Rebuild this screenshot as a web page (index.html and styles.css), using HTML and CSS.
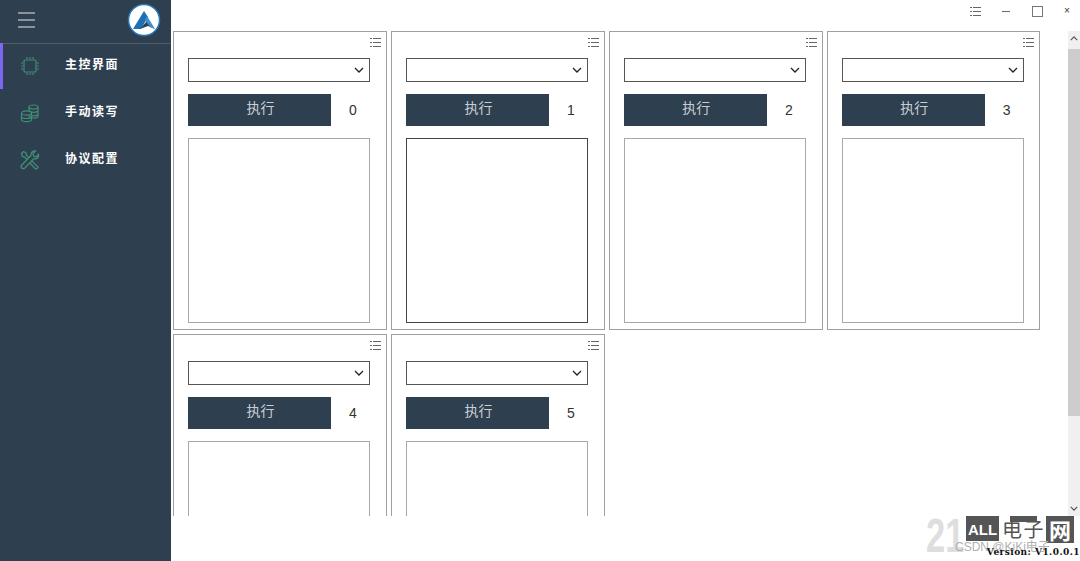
FILE: index.html
```html
<!DOCTYPE html>
<html lang="zh">
<head>
    <meta charset="UTF-8">
    <title>主控界面</title>
    <link rel="stylesheet" href="styles.css">
</head>

<body>
    <!-- 左侧菜单 -->
    <aside class="side">
        <div class="side-top">
            <div class="burger"><i></i><i></i><i></i></div>
            <svg class="logo" viewBox="0 0 34 34" width="34" height="34">
                <circle cx="17" cy="17" r="15.500" fill="#fff" stroke="#2a78b8" stroke-width="1.500"/>
                <path d="M6 26 L17 8 L21 14 L14 26 Z" fill="#1f6fb5"/>
                <path d="M13 26 L20 18 L28 26 L21 23 Z" fill="#2f3f52"/>
                <path d="M20 13 L28 26 L23 24 L18 17 Z" fill="#3f8fd0"/>
            </svg>
        </div>
        <ul class="menu">
            <li class="on">
                <svg viewBox="0 0 20 20" width="20" height="20" fill="none" stroke="#3f8f74" stroke-width="1.200">
                    <rect x="4" y="4" width="12" height="12" rx="1"/>
                    <path d="M7 1v2M10 1v2M13 1v2M7 17v2M10 17v2M13 17v2M1 7h2M1 10h2M1 13h2M17 7h2M17 10h2M17 13h2"/>
                </svg>
                <span>主控界面</span>
            </li>
            <li>
                <svg viewBox="0 0 20 20" width="20" height="20" fill="none" stroke="#3f8f74" stroke-width="1.200">
                    <ellipse cx="13.500" cy="4" rx="4.500" ry="2"/>
                    <path d="M9 4v9c0 1 2 2 4.500 2s4.500-1 4.500-2V4M11 8.800c.7.300 1.600.500 2.500.500 2.500 0 4.500-1 4.500-2M11 12.300c.7.300 1.600.500 2.500.500 2.500 0 4.500-1 4.500-2"/>
                    <ellipse cx="6.500" cy="10" rx="5" ry="2.200" fill="#2e3f50"/>
                    <path d="M1.500 10v6.500c0 1.200 2.200 2.200 5 2.200s5-1 5-2.200V10M1.500 13.300c0 1.200 2.200 2.200 5 2.200s5-1 5-2.200"/>
                </svg>
                <span>手动读写</span>
            </li>
            <li>
                <svg viewBox="0 0 20 20" width="20" height="20" fill="none" stroke="#3f8f74" stroke-width="1.300">
                    <path d="M1.500 3.500 3.500 1.500 6 3l.5 2.500L18 17l-1 1.500-1.500.5L4.500 7 2.500 6.500Z"/>
                    <path d="M18.500 4.500 16 7 13.500 6 13 3.500 15.500 1C13 .5 10.500 2.500 11 5.500L1.800 15c-1 1.200-.8 2.300 0 3 .8.800 2 .8 3 0L13.800 8.800c3 .7 5.300-1.300 4.700-4.300Z" fill="#2e3f50"/>
                </svg>
                <span>协议配置</span>
            </li>
        </ul>
    </aside>

    <main class="main">
        <!-- 窗口按钮 -->
        <header class="bar">
            <svg class="list-ico" viewBox="0 0 11 9" width="11" height="9"><path d="M0 .5h2M3 .5h8M0 4.500h2M3 4.500h8M0 8.500h2M3 8.500h8" stroke="#666" fill="none"/></svg>
            <span class="win-min"></span>
            <span class="win-max"></span>
            <span class="win-close">×</span>
        </header>

        <div class="body">
            <div class="cards">
                <section class="card">
                    <svg class="list-ico" viewBox="0 0 11 9" width="11" height="9"><path d="M0 .5h2M3 .5h8M0 4.500h2M3 4.500h8M0 8.500h2M3 8.500h8" stroke="#666" fill="none"/></svg>
                    <div class="sel"><svg viewBox="0 0 10 6" width="10" height="6"><path d="M1 1l4 4 4-4" stroke="#222" stroke-width="1.300" fill="none"/></svg></div>
                    <div class="row"><button class="run">执行</button><span class="num">0</span></div>
                    <div class="box"></div>
                </section>
                <section class="card">
                    <svg class="list-ico" viewBox="0 0 11 9" width="11" height="9"><path d="M0 .5h2M3 .5h8M0 4.500h2M3 4.500h8M0 8.500h2M3 8.500h8" stroke="#666" fill="none"/></svg>
                    <div class="sel"><svg viewBox="0 0 10 6" width="10" height="6"><path d="M1 1l4 4 4-4" stroke="#222" stroke-width="1.300" fill="none"/></svg></div>
                    <div class="row"><button class="run">执行</button><span class="num">1</span></div>
                    <div class="box dark"></div>
                </section>
                <section class="card">
                    <svg class="list-ico" viewBox="0 0 11 9" width="11" height="9"><path d="M0 .5h2M3 .5h8M0 4.500h2M3 4.500h8M0 8.500h2M3 8.500h8" stroke="#666" fill="none"/></svg>
                    <div class="sel"><svg viewBox="0 0 10 6" width="10" height="6"><path d="M1 1l4 4 4-4" stroke="#222" stroke-width="1.300" fill="none"/></svg></div>
                    <div class="row"><button class="run">执行</button><span class="num">2</span></div>
                    <div class="box"></div>
                </section>
                <section class="card">
                    <svg class="list-ico" viewBox="0 0 11 9" width="11" height="9"><path d="M0 .5h2M3 .5h8M0 4.500h2M3 4.500h8M0 8.500h2M3 8.500h8" stroke="#666" fill="none"/></svg>
                    <div class="sel"><svg viewBox="0 0 10 6" width="10" height="6"><path d="M1 1l4 4 4-4" stroke="#222" stroke-width="1.300" fill="none"/></svg></div>
                    <div class="row"><button class="run">执行</button><span class="num">3</span></div>
                    <div class="box"></div>
                </section>
                <section class="card">
                    <svg class="list-ico" viewBox="0 0 11 9" width="11" height="9"><path d="M0 .5h2M3 .5h8M0 4.500h2M3 4.500h8M0 8.500h2M3 8.500h8" stroke="#666" fill="none"/></svg>
                    <div class="sel"><svg viewBox="0 0 10 6" width="10" height="6"><path d="M1 1l4 4 4-4" stroke="#222" stroke-width="1.300" fill="none"/></svg></div>
                    <div class="row"><button class="run">执行</button><span class="num">4</span></div>
                    <div class="box"></div>
                </section>
                <section class="card">
                    <svg class="list-ico" viewBox="0 0 11 9" width="11" height="9"><path d="M0 .5h2M3 .5h8M0 4.500h2M3 4.500h8M0 8.500h2M3 8.500h8" stroke="#666" fill="none"/></svg>
                    <div class="sel"><svg viewBox="0 0 10 6" width="10" height="6"><path d="M1 1l4 4 4-4" stroke="#222" stroke-width="1.300" fill="none"/></svg></div>
                    <div class="row"><button class="run">执行</button><span class="num">5</span></div>
                    <div class="box"></div>
                </section>
            </div>
            <!-- 滚动条 -->
            <div class="scroll">
                <svg viewBox="0 0 10 6" width="8" height="5"><path d="M1 5l4-4 4 4" stroke="#555" stroke-width="1.500" fill="none"/></svg>
                <div class="thumb"></div>
                <svg class="down" viewBox="0 0 10 6" width="8" height="5"><path d="M1 1l4 4 4-4" stroke="#555" stroke-width="1.500" fill="none"/></svg>
            </div>
        </div>

        <footer class="foot">
            <div class="mark">
                <span class="mark-21">21</span>
                <span class="mark-all">ALL</span>
                <span class="mark-block"></span>
                <span class="mark-cn">电</span>
                <span class="mark-cn">子</span>
                <span class="mark-net">网</span>
                <span class="mark-csdn">CSDN @KiKi电子</span>
            </div>
            <span class="ver">Version: V1.0.0.1</span>
        </footer>
    </main>
</body>
</html>
```

FILE: styles.css
```css
html,
body {
    margin: 0;
    padding: 0;
    height: 100%;
}

body {
    display: flex;
    height: 561px;
    overflow: hidden;
    background-color: #fff;
    font-family: "Liberation Sans", "Noto Sans CJK SC", sans-serif;
}

/*左侧菜单*/
.side {
    flex: none;
    width: 171px;
    background-color: #2e3f50;
}

.side-top {
    display: flex;
    align-items: center;
    justify-content: space-between;
    box-sizing: border-box;
    height: 44px;
    padding: 0 10px 3px 18px;
    border-bottom: 1px solid #4f5d6b;
}

.burger i {
    display: block;
    width: 17px;
    height: 2px;
    margin: 5px 0;
    background-color: #8a939c;
}

.menu {
    margin: -1px 0 0;
    padding: 0;
    list-style: none;
}

.menu li {
    display: flex;
    align-items: center;
    box-sizing: border-box;
    height: 47.500px;
    padding-left: 17px;
    border-left: 3px solid transparent;
}

.menu li.on {
    height: 46px;
    border-left-color: #7b68ee;
}

.menu span {
    margin: 0 0 4px 25px;
    color: #fff;
    font: bold 12px/1 "Noto Sans CJK SC", sans-serif;
    letter-spacing: 1.500px;
}

/*主区域*/
.main {
    flex: 1;
    display: flex;
    flex-direction: column;
    min-width: 0;
}

.bar {
    flex: none;
    display: flex;
    align-items: center;
    box-sizing: border-box;
    height: 31px;
    padding: 0 0 9px 799px;
}

.bar .list-ico {
    position: static;
    margin-right: 21px;
}

.win-min {
    width: 8px;
    height: 1px;
    margin-right: 22px;
    background-color: #666;
}

.win-max {
    width: 9px;
    height: 9px;
    margin-right: 21px;
    border: 1px solid #777;
}

.win-close {
    color: #333;
    font-size: 10px;
    line-height: 10px;
}

.body {
    flex: none;
    display: flex;
    height: 485px;
    overflow: hidden;
}

.cards {
    flex: 1;
    display: flex;
    flex-wrap: wrap;
    align-content: flex-start;
    gap: 4px 4.100px;
    padding-left: 2px;
}

.card {
    position: relative;
    box-sizing: border-box;
    width: 213.800px;
    height: 299px;
    padding: 26px 15.800px 6px 14px;
    border: 1px solid #a0a0a0;
}

.card .list-ico {
    position: absolute;
    top: 6px;
    right: 5px;
}

.sel {
    display: flex;
    align-items: center;
    justify-content: flex-end;
    box-sizing: border-box;
    height: 24px;
    padding-right: 5px;
    border: 1px solid #555;
}

.row {
    display: flex;
    align-items: center;
    margin-top: 12px;
}

.run {
    flex: none;
    width: 143px;
    height: 32px;
    padding: 0 0 6px 2px;
    border: 0;
    background-color: #2e3f50;
    color: #c9ced3;
    font: 14px "Noto Sans CJK SC", sans-serif;
}

.num {
    flex: none;
    width: 44px;
    color: #333;
    font-size: 14px;
    text-align: center;
}

.box {
    box-sizing: border-box;
    height: 185px;
    margin-top: 12px;
    border: 1px solid #a8a8a8;
}

.box.dark {
    border-color: #444;
}

.scroll {
    flex: none;
    display: flex;
    flex-direction: column;
    align-items: center;
    width: 12px;
    background-color: #f0f0f0;
}

.scroll svg {
    flex: none;
    margin: 5px 0;
}

.thumb {
    width: 100%;
    height: 367px;
    margin-top: 3px;
    background-color: #cdcdcd;
}

.scroll .down {
    margin-top: auto;
}

.foot {
    flex: 1;
    display: flex;
    justify-content: flex-end;
    align-items: flex-end;
    position: relative;
}

.ver {
    position: relative;
    margin: 0 0 4px;
    color: #111;
    font: bold 9px/1 "DejaVu Serif", serif;
    letter-spacing: .45px;
    white-space: nowrap;
}

/*水印*/
.mark {
    position: absolute;
    left: 755px;
    top: 0;
    display: flex;
    align-items: flex-start;
    height: 45px;
}

.mark-21 {
    width: 40px;
    margin-top: 1px;
    color: #dedede;
    font: bold 48px/38px "Liberation Sans", sans-serif;
    transform: scaleX(.72);
    transform-origin: left center;
}

.mark-all {
    width: 33px;
    height: 25px;
    margin-right: 3px;
    background-color: #555;
    color: #fff;
    font: bold 15px/28px "Liberation Sans", sans-serif;
    text-align: center;
}

.mark-block {
    position: absolute;
    left: 84px;
    top: 0;
    width: 27px;
    height: 6px;
    background-color: #555;
}

.mark-cn {
    position: relative;
    width: 21.500px;
    color: #555;
    font: 20px/26px "Noto Sans CJK SC", sans-serif;
}

.mark-net {
    width: 28px;
    height: 27px;
    margin-left: 1px;
    background-color: #555;
    color: #fff;
    font: bold 22px/27px "Noto Sans CJK SC", sans-serif;
    text-align: center;
}

.mark-csdn {
    position: absolute;
    left: 29px;
    top: 25px;
    color: #b0b0b0;
    font: 12px/12px "Liberation Sans", "Noto Sans CJK SC", sans-serif;
    white-space: nowrap;
}
```
